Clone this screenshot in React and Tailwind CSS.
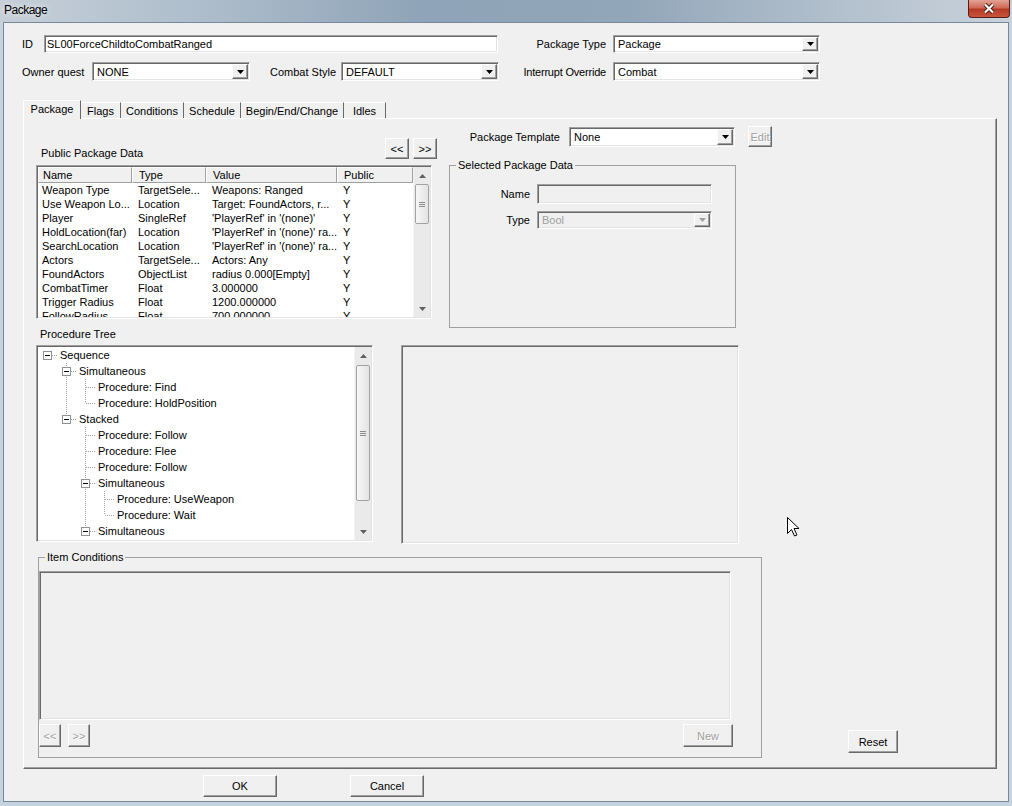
import React from "react";

const RAISED =
  "bg-[#f0f0f0] border border-t-white border-l-white border-r-[#696969] border-b-[#696969] shadow-[inset_-1px_-1px_0_#a0a0a0]";
const SUNKEN =
  "border border-t-[#a0a0a0] border-l-[#a0a0a0] border-r-white border-b-white shadow-[inset_1px_1px_0_#696969,inset_-1px_-1px_0_#e3e3e3]";
const DIS_TEXT = "text-[#a0a0a0] [text-shadow:1px_1px_0_#fff]";

const Tri = ({ up, color = "#000" }) => (
  <svg width="7" height="4" viewBox="0 0 7 4">
    <path d={up ? "M0 4h7L3.5 0z" : "M0 0h7L3.5 4z"} fill={color} />
  </svg>
);

const Btn = ({ children, className, disabled }) => (
  <div
    className={`${RAISED} flex items-center justify-center ${
      disabled ? DIS_TEXT : "text-black"
    } ${className}`}
  >
    {children}
  </div>
);

const Combo = ({ value, className, disabled }) => (
  <div
    className={`${SUNKEN} flex p-[1px] ${
      disabled ? "bg-[#f0f0f0]" : "bg-white"
    } ${className}`}
  >
    <div
      className={`flex-1 flex items-center pl-[3px] whitespace-nowrap overflow-hidden ${
        disabled ? "text-[#a0a0a0]" : "text-black"
      }`}
    >
      {value}
    </div>
    <div className={`${RAISED} w-[16px] flex items-center justify-center`}>
      <Tri color={disabled ? "#a0a0a0" : "#000"} />
    </div>
  </div>
);

// right-aligned label that may overflow to the left instead of wrapping
const RLabel = ({ children, className }) => (
  <span className={`flex justify-end whitespace-nowrap ${className}`}>
    <span>{children}</span>
  </span>
);

const VScroll = ({ thumbClass }) => (
  <div className="w-[17px] flex flex-col bg-[#eaeaea] border-l border-[#f4f4f4]">
    <div className="h-[17px] flex items-center justify-center">
      <Tri up color="#606060" />
    </div>
    <div className="flex-1">
      <div
        className={`mx-[1px] rounded-[2px] border border-[#a3a3a3] bg-[linear-gradient(90deg,#f7f7f7,#e3e3e3)] flex flex-col items-center justify-center gap-[1px] ${thumbClass}`}
      >
        <div className="w-[6px] h-px bg-[#8c8c8c]" />
        <div className="w-[6px] h-px bg-[#8c8c8c]" />
        <div className="w-[6px] h-px bg-[#8c8c8c]" />
      </div>
    </div>
    <div className="h-[17px] flex items-center justify-center">
      <Tri color="#606060" />
    </div>
  </div>
);

const COLS = [
  { label: "Name", w: "w-[94px] pl-[4px]" },
  { label: "Type", w: "w-[74px] pl-[6px]" },
  { label: "Value", w: "w-[131px] pl-[6px]" },
  { label: "Public", w: "w-[76px] pl-[6px]" },
];

const ROWS = [
  ["Weapon Type", "TargetSele...", "Weapons: Ranged", "Y"],
  ["Use Weapon Lo...", "Location", "Target: FoundActors, r...", "Y"],
  ["Player", "SingleRef", "'PlayerRef' in '(none)'", "Y"],
  ["HoldLocation(far)", "Location", "'PlayerRef' in '(none)' ra...", "Y"],
  ["SearchLocation", "Location", "'PlayerRef' in '(none)' ra...", "Y"],
  ["Actors", "TargetSele...", "Actors: Any", "Y"],
  ["FoundActors", "ObjectList", "radius 0.000[Empty]", "Y"],
  ["CombatTimer", "Float", "3.000000", "Y"],
  ["Trigger Radius", "Float", "1200.000000", "Y"],
  ["FollowRadius", "Float", "700.000000", "Y"],
];

const TREE = [
  { t: "Sequence", l: 0, box: true },
  { t: "Simultaneous", l: 1, box: true },
  { t: "Procedure: Find", l: 2 },
  { t: "Procedure: HoldPosition", l: 2 },
  { t: "Stacked", l: 1, box: true },
  { t: "Procedure: Follow", l: 2 },
  { t: "Procedure: Flee", l: 2 },
  { t: "Procedure: Follow", l: 2 },
  { t: "Simultaneous", l: 2, box: true },
  { t: "Procedure: UseWeapon", l: 3 },
  { t: "Procedure: Wait", l: 3 },
  { t: "Simultaneous", l: 2, box: true },
];
const PAD = ["pl-[22px]", "pl-[41px]", "pl-[60px]", "pl-[79px]"];
const CX = [9, 28, 47, 66];
const TX = [22, 41, 60, 79];
const VLINES = [
  [28, 16, 72],
  [47, 32, 56],
  [47, 80, 184],
  [66, 144, 168],
];

const PackageList = () => (
  <div className={`${SUNKEN} bg-white p-[1px] w-[396px] h-[154px] flex`}>
    <div className="flex-1 overflow-hidden">
      <div className="flex h-[16px]">
        {COLS.map((c) => (
          <div
            key={c.label}
            className={`${c.w} flex items-center bg-[#f0f0f0] border-l border-t border-white border-r border-b border-r-[#a0a0a0] border-b-[#a0a0a0]`}
          >
            {c.label}
          </div>
        ))}
      </div>
      {ROWS.map((r, i) => (
        <div key={i} className="flex h-[14px] leading-[14px]">
          {r.map((cell, j) => (
            <div
              key={j}
              className={`${COLS[j].w} whitespace-nowrap overflow-hidden`}
            >
              {cell}
            </div>
          ))}
        </div>
      ))}
    </div>
    <VScroll thumbClass="h-[40px]" />
  </div>
);

const ProcedureTree = () => (
  <div className={`${SUNKEN} bg-white p-[1px] w-[337px] h-[197px] flex`}>
    <div className="flex-1 relative overflow-hidden">
      <svg
        className="absolute left-0 top-0"
        width="316"
        height="193"
        viewBox="0 0 316 193"
      >
        <g stroke="#a0a0a0" strokeWidth="1" strokeDasharray="1 1">
          {VLINES.map(([x, y1, y2], i) => (
            <line key={i} x1={x + 0.5} x2={x + 0.5} y1={y1} y2={y2} />
          ))}
          {TREE.map((n, i) => {
            const cy = 8 + 16 * i + 0.5;
            const x1 = n.box ? CX[n.l] + 5 : CX[n.l] + 1;
            return (
              <line key={i} x1={x1} x2={TX[n.l] - 3} y1={cy} y2={cy} />
            );
          })}
        </g>
        {TREE.map((n, i) =>
          n.box ? (
            <g key={i}>
              <rect
                x={CX[n.l] - 4 + 0.5}
                y={8 + 16 * i - 4 + 0.5}
                width="8"
                height="8"
                fill="#fff"
                stroke="#919191"
              />
              <line
                x1={CX[n.l] - 2}
                x2={CX[n.l] + 3}
                y1={8 + 16 * i + 0.5}
                y2={8 + 16 * i + 0.5}
                stroke="#000"
              />
            </g>
          ) : null
        )}
      </svg>
      <div className="relative">
        {TREE.map((n, i) => (
          <div
            key={i}
            className={`h-[16px] flex items-center whitespace-nowrap ${PAD[n.l]}`}
          >
            {n.t}
          </div>
        ))}
      </div>
    </div>
    <VScroll thumbClass="mt-px h-[136px]" />
  </div>
);

const TABS = [
  { t: "Flags", w: "w-[40px]" },
  { t: "Conditions", w: "w-[63px]" },
  { t: "Schedule", w: "w-[57px]" },
  { t: "Begin/End/Change", w: "w-[103px]" },
  { t: "Idles", w: "w-[42px]" },
];

const TitleBar = () => (
  <div className="h-[22px] flex items-start bg-[linear-gradient(90deg,#c6cfd8_0%,#b0bfcd_18%,#8fa4b8_42%,#92a6b9_62%,#b1bfcc_82%,#c9d2db_100%)]">
    <span className="pl-[4px] pt-[3px] text-[12px] tracking-[-0.5px] leading-[14px] [text-shadow:0_0_6px_#fff]">
      Package
    </span>
    <div className="ml-auto mr-[2px] w-[42px] h-[18px] rounded-b-[4px] border border-t-0 border-[#5a1c14] bg-[linear-gradient(180deg,#e3a394_0%,#cf6a58_45%,#b53a26_55%,#c8553d_100%)] flex items-center justify-center">
      <svg width="12" height="11" viewBox="0 0 12 11">
        <path d="M2 1.5l8 8M10 1.5l-8 8" stroke="#4a1810" strokeWidth="4" />
        <path d="M2 1.5l8 8M10 1.5l-8 8" stroke="#fff" strokeWidth="2.2" />
      </svg>
    </div>
  </div>
);

export default function App() {
  return (
    <div className="relative w-[1012px] h-[806px] overflow-hidden bg-[#c5d3e0] font-['Liberation_Sans',Arial,sans-serif] text-[11px] leading-[12px] text-black select-none">
      <TitleBar />
      <div className="mx-[3px] h-[780px] border border-[#77889a] bg-[#f0f0f0] pl-[18px]">
        {/* top fields */}
        <div className="pt-[12px]">
          <div className="flex items-center h-[18px]">
            <span className="w-[22px]">ID</span>
            <div className={`${SUNKEN} bg-white w-[454px] h-[18px] flex items-center pl-[2px]`}>
              SL00ForceChildtoCombatRanged
            </div>
            <RLabel className="ml-[25px] w-[83px]">Package Type</RLabel>
            <Combo value="Package" className="ml-[7px] w-[207px] h-[18px]" />
          </div>
          <div className="flex items-center h-[19px] mt-[9px]">
            <span className="w-[70px] whitespace-nowrap">Owner quest</span>
            <Combo value="NONE" className="w-[158px] h-[19px]" />
            <span className="ml-[20px] w-[71px] whitespace-nowrap">Combat Style</span>
            <Combo value="DEFAULT" className="w-[158px] h-[19px]" />
            <RLabel className="ml-[24px] w-[83px] tracking-[-0.2px]">Interrupt Override</RLabel>
            <Combo value="Combat" className="ml-[7px] w-[207px] h-[19px]" />
          </div>
        </div>

        {/* tabs */}
        <div className="ml-[1px] mt-[19px] flex items-end h-[18px]">
          <div className="relative z-10 w-[58px] h-[19px] -mb-px flex items-center justify-center pb-[2px] bg-[#f0f0f0] border-l border-t border-white border-r border-r-[#696969]">
            Package
          </div>
          {TABS.map((t) => (
            <div
              key={t.t}
              className={`${t.w} h-[16px] flex items-center justify-center border-t border-white border-r border-r-[#696969]`}
            >
              {t.t}
            </div>
          ))}
        </div>
        <div className="ml-[1px] w-[974px] h-[651px] border-l border-t border-white border-r border-b border-r-[#696969] border-b-[#696969] shadow-[inset_-1px_-1px_0_#a0a0a0] pl-[12px]">
          {/* row 1 */}
          <div className="flex items-start mt-[7px]">
            <div className="w-[401px] mt-[12px]">
              <div className="flex items-end justify-between h-[21px]">
                <span className="pl-[5px]">Public Package Data</span>
                <div className="flex gap-[4px]">
                  <Btn className="w-[24px] h-[21px]">&lt;&lt;</Btn>
                  <Btn className="w-[24px] h-[21px]">&gt;&gt;</Btn>
                </div>
              </div>
              <div className="mt-[6px]">
                <PackageList />
              </div>
            </div>
            <div className="ml-[12px]">
              <div className="flex items-center h-[21px]">
                <RLabel className="w-[111px]">Package Template</RLabel>
                <Combo value="None" className="ml-[9px] w-[166px] h-[20px]" />
                <Btn disabled className="ml-[13px] w-[24px] h-[21px]">
                  Edit
                </Btn>
              </div>
              <fieldset className="mt-[12px] w-[287px] h-[169px] border border-[#a0a0a0]">
                <legend className="ml-[6px] px-[2px] leading-[12px]">
                  Selected Package Data
                </legend>
                <div className="mt-[13px] flex items-center h-[20px]">
                  <RLabel className="w-[80px]">Name</RLabel>
                  <div className={`${SUNKEN} ml-[7px] w-[175px] h-[20px] bg-[#f0f0f0]`} />
                </div>
                <div className="mt-[7px] flex items-center h-[18px]">
                  <RLabel className="w-[80px]">Type</RLabel>
                  <Combo disabled value="Bool" className="ml-[7px] w-[175px] h-[18px]" />
                </div>
              </fieldset>
            </div>
          </div>

          {/* row 2 */}
          <div className="flex items-start">
            <div>
              <div className="pl-[4px] h-[12px]">Procedure Tree</div>
              <div className="mt-[5px]">
                <ProcedureTree />
              </div>
            </div>
            <div className={`${SUNKEN} ml-[28px] mt-[17px] w-[338px] h-[199px] bg-[#f0f0f0]`} />
          </div>

          {/* row 3 */}
          <div className="flex items-end mt-[7px]">
            <fieldset className="ml-[2px] w-[724px] h-[207px] border border-[#a0a0a0]">
              <legend className="ml-[6px] px-[2px] leading-[12px]">Item Conditions</legend>
              <div className={`${SUNKEN} mt-[8px] w-[692px] h-[149px] bg-[#f0f0f0]`} />
              <div className="mt-[4px] flex w-[694px] h-[23px]">
                <Btn disabled className="w-[22px] h-[23px]">&lt;&lt;</Btn>
                <Btn disabled className="ml-[7px] w-[22px] h-[23px]">&gt;&gt;</Btn>
                <Btn disabled className="ml-auto w-[50px] h-[23px]">New</Btn>
              </div>
            </fieldset>
            <Btn className="ml-[86px] mb-[5px] w-[50px] h-[23px]">Reset</Btn>
          </div>
        </div>

        {/* dialog buttons */}
        <div className="flex mt-[6px]">
          <Btn className="ml-[181px] w-[74px] h-[22px]">OK</Btn>
          <Btn className="ml-[73px] w-[74px] h-[22px]">Cancel</Btn>
        </div>
      </div>

      {/* mouse pointer */}
      <svg
        className="absolute left-[787px] top-[517px]"
        width="13"
        height="20"
        viewBox="0 0 13 20"
      >
        <path
          d="M0.5 0.5V16.5L4.5 12.5L7.5 19L10 18L7 11.5H12Z"
          fill="#fff"
          stroke="#000"
          strokeLinejoin="round"
        />
      </svg>
    </div>
  );
}
